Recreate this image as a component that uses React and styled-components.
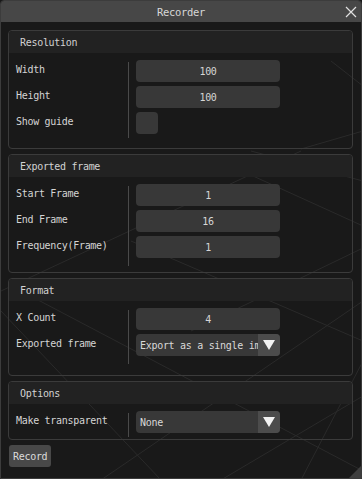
import styled, { createGlobalStyle } from 'styled-components'

const Global = createGlobalStyle`
  html, body {
    margin: 0;
    padding: 0;
    background: #181818;
  }
  body {
    font-family: "DejaVu Sans Mono", "Liberation Mono", monospace;
    font-size: 10px;
    letter-spacing: -0.3px;
    color: #d4d4d4;
  }
`

const Window = styled.div`
  position: relative;
  width: 362px;
  height: 479px;
  box-sizing: border-box;
  border: 1px solid #3c3c3c;
  border-radius: 4px 4px 0 0;
  background: #191919;
  overflow: hidden;
`

const Backdrop = styled.svg`
  position: absolute;
  left: 0;
  top: 0;
  pointer-events: none;
`

const TitleBar = styled.div`
  position: relative;
  height: 21px;
  background: #474747;
  display: flex;
  align-items: center;
  justify-content: center;
  color: #d8d8d8;
  font-size: 10.5px;
`

const Close = styled.svg`
  position: absolute;
  right: 4px;
  top: 5px;
`

const Content = styled.div`
  position: relative;
  padding: 8px 8px 0 7px;
  display: flex;
  flex-direction: column;
  gap: 5px;
`

const Section = styled.section`
  border: 1px solid #3b3b3b;
  border-radius: 4px;
  padding-bottom: ${p => p.$pb}px;
`

const SectionHead = styled.div`
  height: 22px;
  background: #222222;
  border-radius: 3px 3px 0 0;
  padding-left: 11px;
  display: flex;
  align-items: center;
  color: #d2d2d2;
  margin-bottom: 7px;
`

const Rows = styled.div`
  display: grid;
  grid-template-columns: 119px 1px 151px;
  grid-auto-rows: 22px;
  row-gap: 4px;
`

const Label = styled.div`
  grid-column: 1;
  padding-left: 7px;
  display: flex;
  align-items: center;
  padding-bottom: 3px;
  white-space: nowrap;
`

const Divider = styled.div`
  grid-column: 2;
  grid-row: 1 / span ${p => p.$span};
  background: #4a4a4a;
  margin-top: 2px;
  margin-bottom: ${p => p.$extra}px;
`

const Field = styled.div`
  grid-column: 3;
  margin-left: 7px;
  height: 22px;
  background: #383838;
  border-radius: 4px;
  display: flex;
  align-items: center;
  justify-content: center;
  color: #d6d6d6;
  padding-top: 1px;
  box-sizing: border-box;
`

const Check = styled.div`
  grid-column: 3;
  margin-left: 7px;
  width: 22px;
  height: 22px;
  background: #383838;
  border-radius: 4px;
`

const Select = styled.div`
  grid-column: 3;
  margin-left: 7px;
  height: 22px;
  background: #383838;
  border-radius: 4px;
  display: flex;
  overflow: hidden;
`

const SelectText = styled.div`
  flex: 1;
  min-width: 0;
  padding-left: 4px;
  padding-top: 1px;
  display: flex;
  align-items: center;
  white-space: nowrap;
  overflow: hidden;
  color: #d8d8d8;
`

const Arrow = styled.div`
  width: 22px;
  flex: none;
  background: #4c4c4c;
  display: flex;
  align-items: center;
  justify-content: center;
`

const Button = styled.div`
  align-self: flex-start;
  height: 22px;
  padding: 0 4px;
  background: #484848;
  border-radius: 3px;
  display: flex;
  align-items: center;
  color: #dcdcdc;
  margin-left: 1px;
`

const Grip = styled.svg`
  position: absolute;
  right: 0;
  bottom: 0;
`

const gridLines = [
  [362, 247, 190, 330],
  [300, 150, 0, 290],
  [230, 165, 362, 225],
  [130, 240, 362, 340],
  [20, 290, 362, 470],
  [0, 310, 160, 479],
  [362, 395, 220, 479],
  [362, 300, 100, 479],
  [250, 150, 362, 180],
  [362, 360, 300, 479],
  [330, 60, 362, 85],
  [300, 148, 362, 130],
]

function Tri() {
  return (
    <svg width="14" height="12" viewBox="0 0 14 12">
      <path d="M1 1 L13 1 L7 11 Z" fill="#f2f2f2" />
    </svg>
  )
}

export default function App() {
  return (
    <Window>
      <Global />
      <Backdrop width="362" height="479">
        {gridLines.map(([x1, y1, x2, y2], i) => (
          <line key={i} x1={x1} y1={y1} x2={x2} y2={y2} stroke="#2a2a2a" strokeWidth="1" />
        ))}
      </Backdrop>

      <TitleBar>
        Recorder
        <Close width="12" height="12" viewBox="0 0 12 12">
          <path d="M1 1 L11 11 M11 1 L1 11" stroke="#e0e0e0" strokeWidth="1.2" />
        </Close>
      </TitleBar>

      <Content>
        <Section $pb={14}>
          <SectionHead>Resolution</SectionHead>
          <Rows>
            <Label>Width</Label>
            <Divider $span={3} $extra={-4} />
            <Field>100</Field>
            <Label>Height</Label>
            <Field>100</Field>
            <Label>Show guide</Label>
            <Check />
          </Rows>
        </Section>

        <Section $pb={14}>
          <SectionHead>Exported frame</SectionHead>
          <Rows>
            <Label>Start Frame</Label>
            <Divider $span={3} $extra={-8} />
            <Field>1</Field>
            <Label>End Frame</Label>
            <Field>16</Field>
            <Label>Frequency(Frame)</Label>
            <Field>1</Field>
          </Rows>
        </Section>

        <Section $pb={19}>
          <SectionHead>Format</SectionHead>
          <Rows>
            <Label>X Count</Label>
            <Divider $span={2} $extra={-8} />
            <Field>4</Field>
            <Label>Exported frame</Label>
            <Select>
              <SelectText>Export as a single image</SelectText>
              <Arrow><Tri /></Arrow>
            </Select>
          </Rows>
        </Section>

        <Section $pb={6}>
          <SectionHead>Options</SectionHead>
          <Rows>
            <Label>Make transparent</Label>
            <Divider $span={1} $extra={-4} />
            <Select>
              <SelectText>None</SelectText>
              <Arrow><Tri /></Arrow>
            </Select>
          </Rows>
        </Section>

        <Button>Record</Button>
      </Content>

      <Grip width="12" height="12" viewBox="0 0 12 12">
        <path d="M12 0 L12 12 L0 12 Z" fill="#3e3e3e" />
      </Grip>
    </Window>
  )
}
